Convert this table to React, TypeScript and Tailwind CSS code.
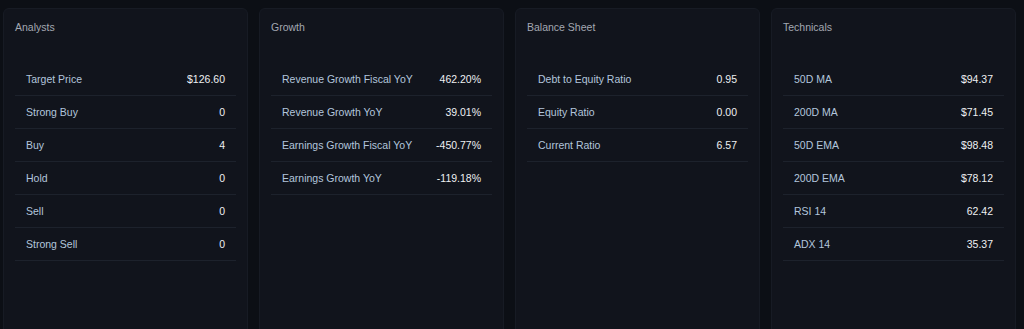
import React from "react";

type Row = { label: string; value: string };

const sections: { title: string; rows: Row[] }[] = [
  {
    title: "Analysts",
    rows: [
      { label: "Target Price", value: "$126.60" },
      { label: "Strong Buy", value: "0" },
      { label: "Buy", value: "4" },
      { label: "Hold", value: "0" },
      { label: "Sell", value: "0" },
      { label: "Strong Sell", value: "0" },
    ],
  },
  {
    title: "Growth",
    rows: [
      { label: "Revenue Growth Fiscal YoY", value: "462.20%" },
      { label: "Revenue Growth YoY", value: "39.01%" },
      { label: "Earnings Growth Fiscal YoY", value: "-450.77%" },
      { label: "Earnings Growth YoY", value: "-119.18%" },
    ],
  },
  {
    title: "Balance Sheet",
    rows: [
      { label: "Debt to Equity Ratio", value: "0.95" },
      { label: "Equity Ratio", value: "0.00" },
      { label: "Current Ratio", value: "6.57" },
    ],
  },
  {
    title: "Technicals",
    rows: [
      { label: "50D MA", value: "$94.37" },
      { label: "200D MA", value: "$71.45" },
      { label: "50D EMA", value: "$98.48" },
      { label: "200D EMA", value: "$78.12" },
      { label: "RSI 14", value: "62.42" },
      { label: "ADX 14", value: "35.37" },
    ],
  },
];

function StatCard({ title, rows }: { title: string; rows: Row[] }) {
  return (
    <div className="w-[245px] h-[340px] shrink-0 rounded-md border border-[#171b24] bg-[#11141c] px-[11px] pt-[11px]">
      <h2 className="text-[10.5px] leading-[14px] text-[#a3a8b2]">{title}</h2>
      <div className="mt-[29px] flex flex-col">
        {rows.map((r) => (
          <div
            key={r.label}
            className="flex h-[33px] items-center justify-between border-b border-[#1d222c] px-[11px] pt-[1px] text-[10.5px]"
          >
            <span className="text-[#b3c6dc]">{r.label}</span>
            <span className="text-[#eef0f2]">{r.value}</span>
          </div>
        ))}
      </div>
    </div>
  );
}

export default function App() {
  return (
    <main
      className="h-[329px] overflow-hidden bg-[#0c0f15] pl-[3px] pt-[8px]"
      style={{ fontFamily: '"Liberation Sans", Arial, sans-serif' }}
    >
      <div className="flex gap-[11px]">
        {sections.map((s) => (
          <StatCard key={s.title} title={s.title} rows={s.rows} />
        ))}
      </div>
    </main>
  );
}
